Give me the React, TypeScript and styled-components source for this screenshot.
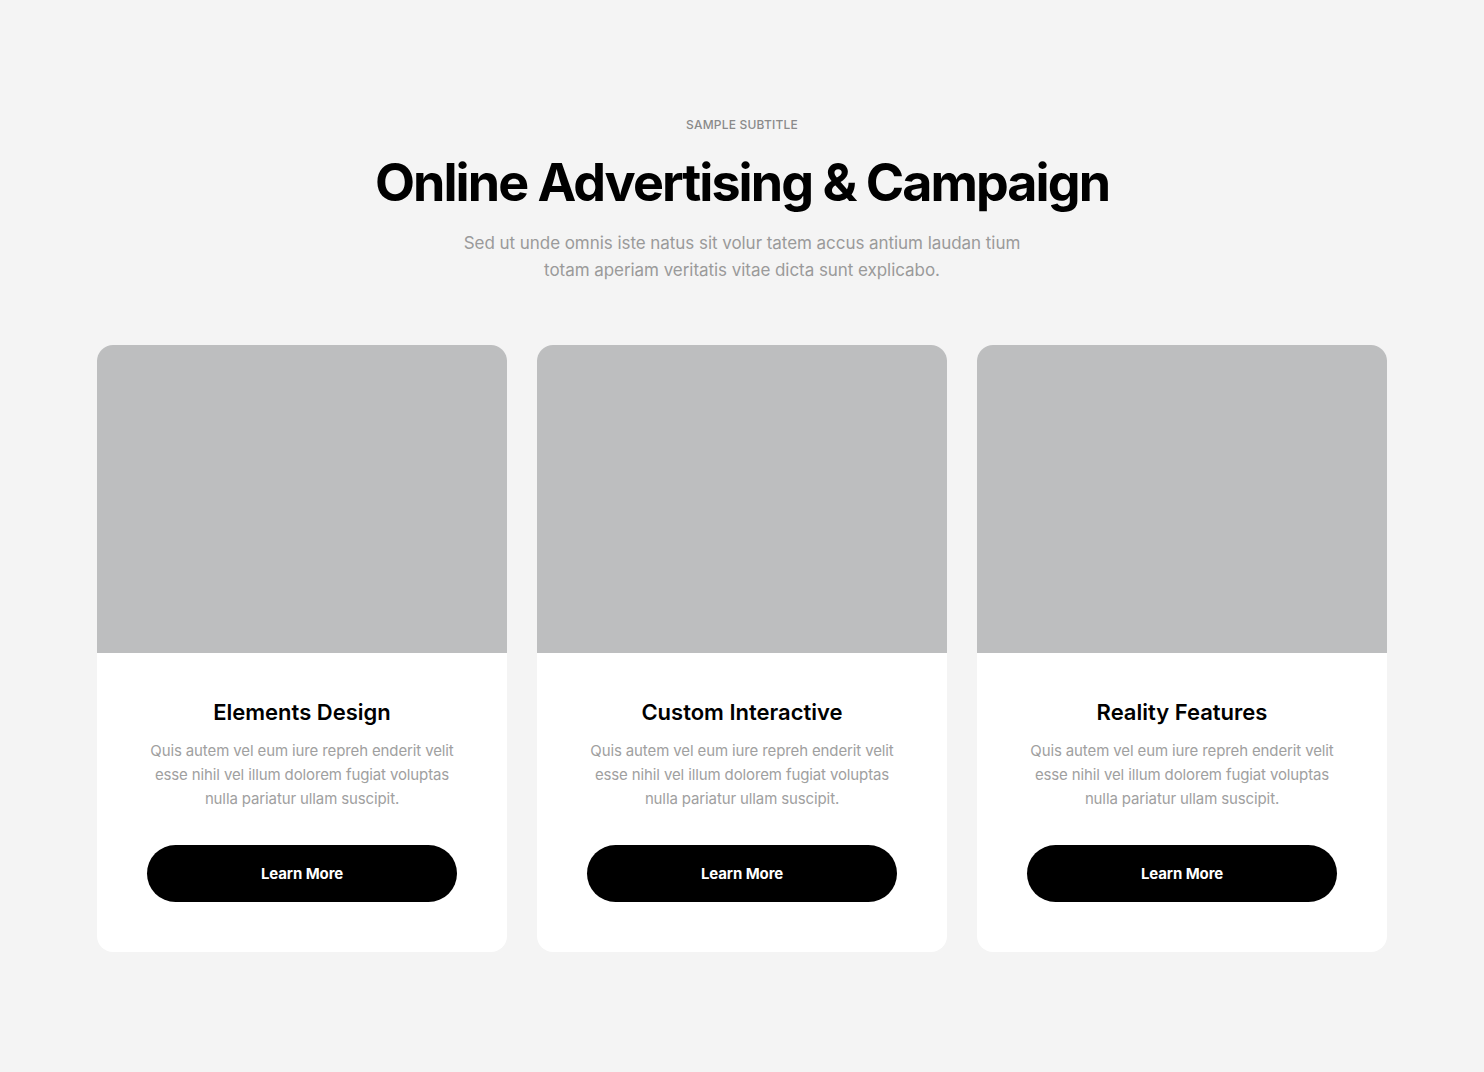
import React from "react";
import styled, { createGlobalStyle } from "styled-components";

const Global = createGlobalStyle`
  html, body { margin: 0; padding: 0; background: #f4f4f4; }
  body { font-family: Inter, "Noto Sans", sans-serif; -webkit-font-smoothing: antialiased; }
  * { box-sizing: border-box; }
`;

const Section = styled.section`
  min-height: 1072px;
  padding: 117px 97px 0;
  display: flex;
  flex-direction: column;
  align-items: center;
`;

const Subtitle = styled.div`
  font-size: 12px;
  line-height: 16px;
  color: #8a8a8a;
  text-transform: uppercase;
  letter-spacing: 0.2px;
  font-weight: 500;
`;

const Title = styled.h1`
  margin: 18px 0 0;
  font-size: 52px;
  line-height: 64px;
  font-weight: 700;
  letter-spacing: -1.95px;
  color: #000;
  text-align: center;
`;

const Lead = styled.p`
  margin: 15px 0 0;
  max-width: 575px;
  font-size: 17px;
  line-height: 27px;
  color: #9a9a9a;
  text-align: center;
  letter-spacing: -0.05px;
`;

const Grid = styled.div`
  margin-top: 61px;
  width: 100%;
  display: grid;
  grid-template-columns: repeat(3, 410px);
  gap: 30px;
  justify-content: center;
`;

const Card = styled.article`
  background: #fff;
  border-radius: 16px;
  overflow: hidden;
  display: flex;
  flex-direction: column;
`;

const Media = styled.div`
  height: 308px;
  background: #bdbebf;
`;

const Body = styled.div`
  padding: 44px 50px 50px;
  display: flex;
  flex-direction: column;
  align-items: center;
  text-align: center;
`;

const CardTitle = styled.h3`
  margin: 0;
  font-size: 22px;
  line-height: 30px;
  font-weight: 600;
  letter-spacing: 0;
  color: #000;
`;

const CardText = styled.p`
  margin: 12px 0 0;
  font-size: 15px;
  line-height: 24px;
  color: #a0a0a0;
  letter-spacing: -0.12px;
`;

const Button = styled.button`
  margin-top: 34px;
  width: 100%;
  height: 57px;
  border: none;
  border-radius: 999px;
  background: #000;
  color: #fff;
  font-family: inherit;
  font-size: 15px;
  font-weight: 700;
  letter-spacing: -0.1px;
  cursor: pointer;
`;

const cards = [
  { title: "Elements Design" },
  { title: "Custom Interactive" },
  { title: "Reality Features" },
];

export default function App() {
  return (
    <>
      <Global />
      <Section>
        <Subtitle>Sample Subtitle</Subtitle>
        <Title>Online Advertising &amp; Campaign</Title>
        <Lead>
          Sed ut unde omnis iste natus sit volur tatem accus antium laudan tium
          totam aperiam veritatis vitae dicta sunt explicabo.
        </Lead>
        <Grid>
          {cards.map((c) => (
            <Card key={c.title}>
              <Media />
              <Body>
                <CardTitle>{c.title}</CardTitle>
                <CardText>
                  Quis autem vel eum iure repreh enderit velit esse nihil vel
                  illum dolorem fugiat voluptas nulla pariatur ullam suscipit.
                </CardText>
                <Button>Learn More</Button>
              </Body>
            </Card>
          ))}
        </Grid>
      </Section>
    </>
  );
}
